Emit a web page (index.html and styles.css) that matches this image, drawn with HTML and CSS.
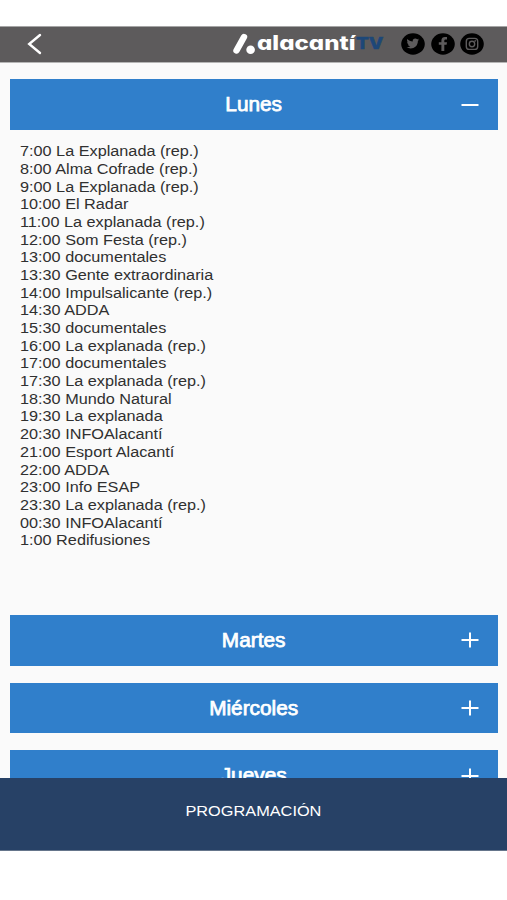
FILE: index.html
```html
<!DOCTYPE html>
<html lang="es">
<head>
<meta charset="utf-8">
<title>Programación</title>
<link rel="stylesheet" href="styles.css">
</head>
<body>
<div class="app">
  <header class="topbar">
    <svg class="back" viewBox="0 0 16 24" aria-label="Volver"><path d="M13 3 2.200 12 13 21"/></svg>
    <svg class="logo" viewBox="0 0 152 26">
      <path class="slash" d="M4.500 19.500 12 6"/>
      <circle class="dot" cx="18.600" cy="18.800" r="4.300"/>
      <text class="word" x="25" y="18.500" textLength="98.500" lengthAdjust="spacingAndGlyphs">alacantí</text>
      <text class="tv" x="124" y="18.300" textLength="27.500" lengthAdjust="spacingAndGlyphs">TV</text>
    </svg>
    <nav class="social">
      <svg viewBox="0 0 24 22"><ellipse cx="12" cy="11" rx="11.8" ry="10.7"/><path class="fill" d="M18.2 6.4c-.5.3-1 .4-1.500.5.500-.3.900-.8 1.100-1.300-.5.300-1 .5-1.600.6a2.700 2.500 0 0 0-4.500 2.300C9.500 8.400 7.600 7.400 6.400 5.900c-.8 1.300-.3 2.700.8 3.400-.4 0-.8-.1-1.200-.3 0 1.200.9 2.200 2.100 2.500-.4.100-.8.100-1.200 0 .4 1 1.300 1.700 2.500 1.700-1.200.9-2.500 1.200-3.900 1.100 4.900 2.800 11.400.3 11.400-6.600.5-.4.900-.8 1.300-1.300z"/></svg>
      <svg viewBox="0 0 24 22"><ellipse cx="12" cy="11" rx="11.800" ry="10.700"/><path class="fill" d="M10.400 18v-6.200H7.800V9.300h2.600V7.500C10.400 5 12 3.900 14 3.900c1 0 1.700.1 2 .2v2.300h-1.300c-1.200 0-1.400.6-1.400 1.300v1.600h2.700l-.4 2.500h-2.300V18z"/></svg>
      <svg viewBox="0 0 24 22"><ellipse cx="12" cy="11" rx="11.800" ry="10.700"/><rect class="line" x="6.300" y="5.400" width="11.400" height="11" rx="3"/><circle class="line" cx="12" cy="11" r="2.700"/><circle class="fill" cx="15.200" cy="7.900" r=".8"/></svg>
    </nav>
  </header>
  <main class="days">
    <section>
      <h2 class="day"><span>Lunes</span><svg viewBox="0 0 18 16"><path d="M.5 8H17.500"/></svg></h2>
      <ul class="programs">
        <li>7:00 La Explanada (rep.)</li>
        <li>8:00 Alma Cofrade (rep.)</li>
        <li>9:00 La Explanada (rep.)</li>
        <li>10:00 El Radar</li>
        <li>11:00 La explanada (rep.)</li>
        <li>12:00 Som Festa (rep.)</li>
        <li>13:00 documentales</li>
        <li>13:30 Gente extraordinaria</li>
        <li>14:00 Impulsalicante (rep.)</li>
        <li>14:30 ADDA</li>
        <li>15:30 documentales</li>
        <li>16:00 La explanada (rep.)</li>
        <li>17:00 documentales</li>
        <li>17:30 La explanada (rep.)</li>
        <li>18:30 Mundo Natural</li>
        <li>19:30 La explanada</li>
        <li>20:30 INFOAlacantí</li>
        <li>21:00 Esport Alacantí</li>
        <li>22:00 ADDA</li>
        <li>23:00 Info ESAP</li>
        <li>23:30 La explanada (rep.)</li>
        <li>00:30 INFOAlacantí</li>
        <li>1:00 Redifusiones</li>
      </ul>
    </section>
    <h2 class="day"><span>Martes</span><svg viewBox="0 0 18 16"><path d="M.5 8H17.500M9 .5V15.500"/></svg></h2>
    <h2 class="day"><span>Miércoles</span><svg viewBox="0 0 18 16"><path d="M.5 8H17.500M9 .5V15.500"/></svg></h2>
    <h2 class="day"><span>Jueves</span><svg viewBox="0 0 18 16"><path d="M.5 8H17.500M9 .5V15.500"/></svg></h2>
  </main>
  <footer class="bottombar"><span>PROGRAMACIÓN</span></footer>
</div>
</body>
</html>
```
FILE: styles.css
```css
* { box-sizing: border-box; }
body {
  margin: 0;
  background: #fff;
  font-family: "Liberation Sans", Arial, sans-serif;
}
.app {
  display: flex;
  flex-direction: column;
  height: 900px;
  padding: 26px 0 49px;
  overflow: hidden;
}
.topbar {
  display: flex;
  align-items: center;
  flex: 0 0 37px;
  padding: 0 23px 1px 27px;
  background: #5d5b5c;
  border-top: 1px solid #a5a5a5;
  border-bottom: 1px solid #b5b5b5;
}
.back { width: 16px; height: 24px; }
.back path {
  fill: none;
  stroke: #fff;
  stroke-width: 2.4;
  stroke-linecap: round;
}
.logo { width: 152px; height: 26px; margin-left: auto; overflow: visible; }
.slash { stroke: #fff; stroke-width: 6.4; stroke-linecap: round; }
.dot { fill: #fff; }
.word {
  fill: #fff;
  font: 800 20px Inter, sans-serif;
  font-feature-settings: "cv11";
}
.tv { fill: #1d4778; stroke: #1d4778; stroke-width: .5; font: 800 16px Inter, sans-serif; }
.social { display: flex; gap: 5.500px; margin-left: 17px; }
.social svg { width: 24px; height: 22px; }
.social .fill { fill: #5d5b5c; }
.social .line { fill: none; stroke: #5d5b5c; stroke-width: 1.4; }
.days {
  display: flex;
  flex-direction: column;
  gap: 17px;
  flex: 1;
  min-height: 0;
  overflow: hidden;
  padding: 16.300px 9.400px 0 10.300px;
  background: #fafafa;
}
.day {
  display: grid;
  grid-template-columns: 28px 1fr 28px;
  align-items: center;
  flex: none;
  height: 50.700px;
  margin: 0;
  padding: 0 14px;
  background: #307fcb;
  color: #fff;
  font-size: 20px;
  font-weight: 400;
}
.day span {
  grid-column: 2;
  text-align: center;
  transform: scaleX(1.04);
  -webkit-text-stroke: .75px #fff;
}
.day svg { width: 18px; height: 16px; justify-self: center; }
.day path { stroke: #fff; stroke-width: 2; fill: none; }
.programs {
  height: 468px;
  margin: 0;
  padding: 13.200px 0 0 9.700px;
  list-style: none;
  color: #303030;
  font-size: 14px;
  line-height: 17.690px;
}
.programs li { transform: scaleX(1.16); transform-origin: left; width: 300px; }
.bottombar {
  display: flex;
  justify-content: center;
  flex: 0 0 73px;
  padding-top: 25px;
  background: #274166;
  border-bottom: 1px solid #65758b;
  color: #fff;
  font-size: 14.500px;
  line-height: 17px;
}
.bottombar span { transform: scaleX(1.125); }
```
